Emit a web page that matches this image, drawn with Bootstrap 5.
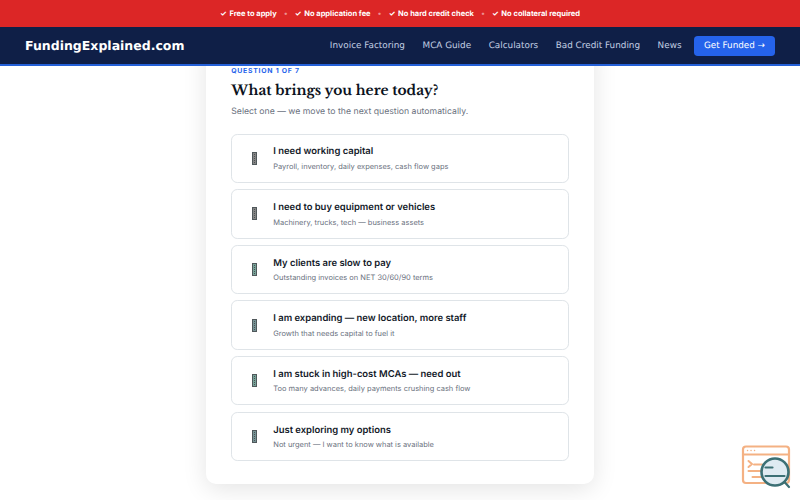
<!DOCTYPE html>
<html lang="en">
  <head>
    <meta charset="UTF-8" />
    <meta name="viewport" content="width=device-width, initial-scale=1.0" />
    <title>FundingExplained.com</title>
    <link
      rel="stylesheet"
      href="https://cdn.jsdelivr.net/npm/bootstrap@5.3.3/dist/css/bootstrap.min.css"
    />
    <script src="https://cdn.jsdelivr.net/npm/bootstrap@5.3.3/dist/js/bootstrap.bundle.min.js"></script>
    <style>
      body {
        font-family: Inter, "Liberation Sans", sans-serif;
        height: 500px;
        overflow: hidden;
        background: #fff;
        text-rendering: geometricPrecision;
      }
      .promo-bar {
        height: 27px;
        background: #dc2626;
        color: #fff;
        font-size: 7.5px;
        font-weight: 700;
        gap: 7.25px;
      }
      .promo-bar .tick {
        margin-right: 1px;
      }
      .promo-bar .dot {
        opacity: 0.5;
      }
      .site-nav {
        height: 39px;
        padding: 0 25px;
        background: #0f1f47;
        border-bottom: 2px solid #2460d8;
        font-family: "DejaVu Sans", sans-serif;
      }
      .site-nav .navbar-brand {
        padding-top: 1px;
        font-size: 12.5px;
        font-weight: 700;
        color: #fff;
      }
      .site-nav .nav-link {
        padding-top: 2px;
        font-size: 8.85px;
        color: #c3cfe4;
        white-space: nowrap;
      }
      .site-nav .navbar-nav {
        gap: 17.5px;
      }
      .site-nav .btn {
        width: 81px;
        height: 20px;
        margin-left: -5px;
        font-size: 8.8px;
        line-height: 20px;
        color: #fff;
        background: #2563eb;
        border-radius: 3.75px;
      }
      .quiz-card {
        width: 387.5px;
        height: 444px;
        margin-top: 40px;
        padding: 25px;
        border-radius: 10px;
        box-shadow: 0 5px 25px rgba(0, 0, 0, 0.11);
      }
      .step-label {
        padding-top: 1px;
        font-size: 6.875px;
        line-height: 10px;
        font-weight: 700;
        letter-spacing: 0.75px;
        color: #2563eb;
      }
      .quiz-title {
        margin: 5px 0 0;
        font-family: "Libre Baskerville", "Liberation Serif", serif;
        font-size: 13.8px;
        line-height: 20px;
        font-weight: 700;
        color: #0b1220;
      }
      .quiz-hint {
        margin: 5px 0 15.5px;
        font-size: 8.7px;
        line-height: 12px;
        color: #6b7280;
      }
      .options {
        gap: 6.25px;
      }
      .option {
        height: 49.375px;
        padding: 0 11px;
        border: 1px solid #dfe4e8;
        border-radius: 6.25px;
        background: #fff;
      }
      .option-icon {
        width: 23px;
        margin-right: 7px;
      }
      .option-text {
        padding-top: 2px;
      }
      .option-name {
        font-size: 9.43px;
        line-height: 14px;
        font-weight: 600;
        color: #111827;
      }
      .option-note {
        margin-top: 1.5px;
        font-size: 7.47px;
        line-height: 12px;
        color: #6b7280;
      }
      .inspect-badge {
        position: fixed;
        left: 741px;
        top: 444px;
      }
    </style>
  </head>
  <body>
    <header class="fixed-top">
      <div class="promo-bar d-flex justify-content-center align-items-center">
        <span><span class="tick">✓</span> Free to apply</span>
        <span class="dot">•</span>
        <span><span class="tick">✓</span> No application fee</span>
        <span class="dot">•</span>
        <span><span class="tick">✓</span> No hard credit check</span>
        <span class="dot">•</span>
        <span><span class="tick">✓</span> No collateral required</span>
      </div>
      <nav class="site-nav d-flex align-items-center justify-content-between">
        <a class="navbar-brand m-0 pb-0" href="#">FundingExplained.com</a>
        <div class="navbar-nav flex-row align-items-center">
          <a class="nav-link px-0 pb-0" href="#">Invoice Factoring</a>
          <a class="nav-link px-0 pb-0" href="#">MCA Guide</a>
          <a class="nav-link px-0 pb-0" href="#">Calculators</a>
          <a class="nav-link px-0 pb-0" href="#">Bad Credit Funding</a>
          <a class="nav-link px-0 pb-0" href="#">News</a>
          <a class="btn border-0 p-0" href="#">Get Funded →</a>
        </div>
      </nav>
    </header>

    <main class="d-flex justify-content-center">
      <section class="quiz-card bg-white">
        <div class="step-label">QUESTION 1 OF 7</div>
        <h1 class="quiz-title">What brings you here today?</h1>
        <p class="quiz-hint">Select one — we move to the next question automatically.</p>
        <div class="options d-flex flex-column" id="options"></div>
      </section>
    </main>

    <svg class="inspect-badge" width="50" height="46" viewBox="0 0 50 46" fill="none" stroke-linecap="round" stroke-linejoin="round">
      <g stroke="#f4b183" stroke-width="2.2">
        <rect x="2" y="2.5" width="46" height="36.5" rx="3" fill="#fff" />
        <path d="M2 10.5H48" />
        <path d="M6.5 6.5h.1M10 6.5h.1M13.5 6.5h.1" stroke-width="1.4" />
        <path d="M7.5 17l3.5 3-3.5 3M13 20.5h8M7.5 27h12M11.5 33h9" stroke-width="2" />
      </g>
      <circle cx="34" cy="28" r="13.5" fill="#dfebf2" stroke="#3c7075" stroke-width="2.6" />
      <path d="M24.5 23.5h7M24.5 32h19M43.5 38l4.5 5" stroke="#3c7075" stroke-width="2.2" />
    </svg>

    <script>
      const options = [
        ["I need working capital", "Payroll, inventory, daily expenses, cash flow gaps", "#858585"],
        ["I need to buy equipment or vehicles", "Machinery, trucks, tech — business assets", "#858585"],
        ["My clients are slow to pay", "Outstanding invoices on NET 30/60/90 terms", "#76a398"],
        ["I am expanding — new location, more staff", "Growth that needs capital to fuel it", "#769395"],
        ["I am stuck in high-cost MCAs — need out", "Too many advances, daily payments crushing cash flow", "#76a398"],
        ["Just exploring my options", "Not urgent — I want to know what is available", "#769395"],
      ];

      document.getElementById("options").innerHTML = options
        .map(
          ([name, note, fill]) => `
          <div class="option d-flex align-items-center">
            <div class="option-icon d-flex justify-content-center">
              <svg width="5" height="13" viewBox="0 0 5 13">
                <rect x=".5" y=".5" width="4" height="12" fill="${fill}" stroke="#50585b" />
                <path d="M2.5 2v9" stroke="#4b5052" stroke-dasharray="1 1" />
              </svg>
            </div>
            <div class="option-text">
              <div class="option-name">${name}</div>
              <div class="option-note">${note}</div>
            </div>
          </div>`
        )
        .join("");
    </script>
  </body>
</html>
